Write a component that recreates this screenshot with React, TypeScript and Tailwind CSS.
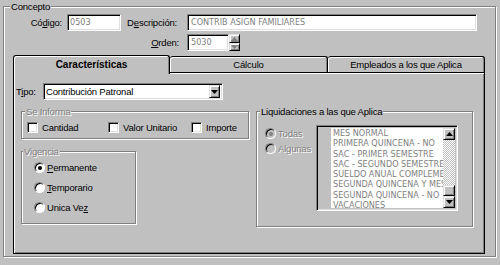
import React from "react";

const sunken =
  "border border-t-[#808080] border-l-[#808080] border-b-white border-r-white shadow-[inset_1px_1px_0_#000,inset_-1px_-1px_0_#dfdfdf]";
const raised =
  "border border-t-[#dfdfdf] border-l-[#dfdfdf] border-b-black border-r-black shadow-[inset_1px_1px_0_#fff,inset_-1px_-1px_0_#808080] bg-[#c0c0c0]";
const etched = "border border-[#808080] shadow-[inset_1px_1px_0_#fff,1px_1px_0_#fff]";
const disabledText = "text-[#808080] [text-shadow:1px_1px_0_#fff]";
const valueFont = "font-['DejaVu_Sans_Condensed','Liberation_Sans_Narrow',sans-serif] text-[9px] tracking-normal";

const DownArrow = ({ color = "#000" }: { color?: string }) => (
  <svg width="7" height="4" viewBox="0 0 7 4">
    <polygon points="0,0 7,0 3.5,4" fill={color} />
  </svg>
);

const UpArrow = ({ color = "#000" }: { color?: string }) => (
  <svg width="7" height="4" viewBox="0 0 7 4">
    <polygon points="0,4 7,4 3.5,0" fill={color} />
  </svg>
);

const Checkbox = ({ label }: { label: string }) => (
  <div className="flex items-center h-[11px]">
    <div className={`w-[11px] h-[11px] bg-white ${sunken}`} />
    <span className="ml-[4px]">{label}</span>
  </div>
);

const Radio = ({
  label,
  checked,
  disabled,
  u,
}: {
  label: string;
  checked?: boolean;
  disabled?: boolean;
  u?: number;
}) => (
  <div className="flex items-center h-[11px]">
    <div
      className={`w-[11px] h-[11px] rounded-full border border-t-[#808080] border-l-[#808080] border-b-white border-r-white shadow-[inset_1px_1px_0_#000] flex items-center justify-center ${
        disabled ? "bg-[#c0c0c0]" : "bg-white"
      }`}
    >
      {checked && (
        <div
          className={`w-[4px] h-[4px] rounded-full ${
            disabled ? "bg-[#808080]" : "bg-black"
          }`}
        />
      )}
    </div>
    <span className={`ml-[2px] ${disabled ? disabledText : ""}`}>
      {u === undefined ? (
        label
      ) : (
        <>
          {label.slice(0, u)}
          <span className="underline">{label[u]}</span>
          {label.slice(u + 1)}
        </>
      )}
    </span>
  </div>
);

const liquidaciones = [
  "MES NORMAL",
  "PRIMERA QUINCENA - NO",
  "SAC - PRIMER SEMESTRE",
  "SAC - SEGUNDO SEMESTRE",
  "SUELDO ANUAL COMPLEMENTARIO",
  "SEGUNDA QUINCENA Y MES",
  "SEGUNDA QUINCENA - NO",
  "VACACIONES",
];

export default function App() {
  return (
    <div className="w-[500px] h-[265px] bg-[#c0c0c0] pl-[3px] pt-[1px] text-[9.5px] tracking-[-0.2px] leading-[11px] text-black font-['Liberation_Sans',sans-serif] overflow-hidden">
      <fieldset className={`w-[493px] ${etched} pb-[2px]`}>
        <legend className="ml-[6px] px-px bg-[#c0c0c0] leading-[11px]">Concepto</legend>

        <div className="mt-[2px] flex items-center h-[17px]">
          <span className="w-[58px] text-right">
            Có<span className="underline">d</span>igo:
          </span>
          <div className={`ml-[5px] w-[54px] h-[17px] bg-white ${sunken} flex items-center pl-[2px] text-[#808080] ${valueFont}`}>
            0503
          </div>
          <span className="w-[56px] text-right">
            D<span className="underline">e</span>scripción:
          </span>
          <div className={`ml-[10px] w-[290px] h-[17px] bg-white ${sunken} flex items-center pl-[3px] text-[#808080] ${valueFont}`}>
            CONTRIB ASIGN FAMILIARES
          </div>
        </div>

        <div className="mt-[3px] flex items-center h-[17px]">
          <span className="w-[175px] text-right">
            <span className="underline">O</span>rden:
          </span>
          <div className={`ml-[8px] w-[42px] h-[17px] bg-white ${sunken} flex items-center pl-[3px] text-[#808080] ${valueFont}`}>
            5030
          </div>
          <div className="w-[11px] h-[17px] flex flex-col">
            <div className={`h-[9px] ${raised} flex items-center justify-center`}>
              <UpArrow color="#808080" />
            </div>
            <div className={`h-[8px] ${raised} flex items-center justify-center`}>
              <DownArrow color="#808080" />
            </div>
          </div>
        </div>

        <div className="mt-[4px] ml-[9px] w-[472px]">
          <div className="flex items-end h-[17px]">
            <div className="relative z-10 w-[157px] h-[19px] -mb-[2px] bg-[#c0c0c0] border-t border-l border-r border-black rounded-t-[3px] shadow-[inset_1px_1px_0_#fff,inset_-1px_0_0_#808080] flex items-center justify-center pb-[1px] font-bold text-[10px] tracking-normal">
              Características
            </div>
            <div className="w-[158px] h-[16px] bg-[#c0c0c0] border-t border-r border-black rounded-t-[3px] shadow-[inset_1px_1px_0_#fff,inset_-1px_0_0_#808080] flex items-center justify-center">
              Cálculo
            </div>
            <div className="w-[157px] h-[16px] bg-[#c0c0c0] border-t border-r border-black rounded-t-[3px] shadow-[inset_1px_1px_0_#fff,inset_-1px_0_0_#808080] flex items-center justify-center">
              Empleados a los que Aplica
            </div>
          </div>

          <div className="w-[472px] h-[182px] border border-black shadow-[inset_1px_1px_0_#fff,inset_-1px_-1px_0_#808080]">
            <div className="mt-[10px] flex items-center h-[17px]">
              <span className="ml-[2px] w-[27px]">
                T<span className="underline">i</span>po:
              </span>
              <div className={`w-[180px] h-[17px] bg-white ${sunken} flex items-center justify-between pl-[2px] pr-[2px]`}>
                <span>Contribución Patronal</span>
                <div className={`w-[11px] h-[13px] ${raised} flex items-center justify-center`}>
                  <DownArrow />
                </div>
              </div>
            </div>

            <div className="mt-[6px] flex items-start">
              <div className="ml-[7px] w-[228px] flex flex-col">
                <fieldset className={`w-[228px] ${etched} pb-[5px]`}>
                  <legend className={`ml-[3px] px-px bg-[#c0c0c0] ${disabledText}`}>Se Informa</legend>
                  <div className="mt-[5px] pl-[5px] flex items-center">
                    <div className="w-[81px]">
                      <Checkbox label="Cantidad" />
                    </div>
                    <div className="w-[83px]">
                      <Checkbox label="Valor Unitario" />
                    </div>
                    <Checkbox label="Importe" />
                  </div>
                </fieldset>

                <fieldset className={`mt-[7px] w-[115px] ${etched} pb-[10px]`}>
                  <legend className={`ml-[1px] px-px bg-[#c0c0c0] ${disabledText}`}>Vigencia</legend>
                  <div className="mt-[5px] pl-[12px] flex flex-col gap-[9px]">
                    <Radio label="Permanente" checked u={0} />
                    <Radio label="Temporario" u={0} />
                    <Radio label="Unica Vez" u={8} />
                  </div>
                </fieldset>
              </div>

              <fieldset className={`ml-[7px] w-[217px] ${etched} pb-[15px]`}>
                <legend className="ml-[3px] px-px bg-[#c0c0c0]">Liquidaciones a las que Aplica</legend>
                <div className="flex items-start">
                  <div className="mt-[11px] pl-[8px] w-[59px] flex flex-col gap-[4px]">
                    <Radio label="Todas" checked disabled />
                    <Radio label="Algunas" disabled />
                  </div>
                  <div className={`mt-[8px] w-[142px] h-[86px] ${sunken} flex p-[2px]`}>
                    <div className="w-[12px] h-full bg-[#c0c0c0]" />
                    <div className={`flex-1 h-full bg-white overflow-hidden pl-[2px] text-[#808080] ${valueFont}`}>
                      {liquidaciones.map((l) => (
                        <div key={l} className="whitespace-nowrap leading-[10.25px]">
                          {l}
                        </div>
                      ))}
                    </div>
                    <div className="w-[12px] h-full flex flex-col">
                      <div className={`h-[12px] ${raised} flex items-center justify-center`}>
                        <UpArrow />
                      </div>
                      <div className="flex-1 flex flex-col justify-end bg-[repeating-conic-gradient(#fff_0%_25%,#c0c0c0_0%_50%)] bg-[length:2px_2px]">
                        <div className={`h-[11px] ${raised}`} />
                      </div>
                      <div className={`h-[12px] ${raised} flex items-center justify-center`}>
                        <DownArrow />
                      </div>
                    </div>
                  </div>
                </div>
              </fieldset>
            </div>
          </div>
        </div>
      </fieldset>
    </div>
  );
}
